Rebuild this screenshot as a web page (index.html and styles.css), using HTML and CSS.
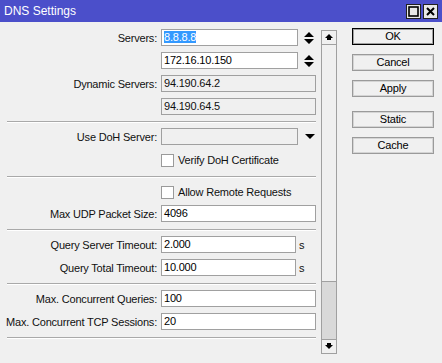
FILE: index.html
```html
<!DOCTYPE html>
<html lang="en">
<head>
<meta charset="UTF-8">
<title>DNS Settings</title>
<link rel="stylesheet" href="styles.css">
</head>
<body>
<div class="window">
    <div class="titlebar">
        <span class="title">DNS Settings</span>
        <div class="title-btns">
            <span class="tbtn">
                <svg width="11" height="11" viewBox="0 0 11 11"><rect x="1" y="1" width="9" height="9" fill="none" stroke="#000" stroke-width="1.6"/></svg>
            </span>
            <span class="tbtn">
                <svg width="11" height="11" viewBox="0 0 11 11"><path d="M2 2 L9 9 M9 2 L2 9" stroke="#000" stroke-width="2"/></svg>
            </span>
        </div>
    </div>

    <div class="main">
        <div class="form">
            <div class="section first">
                <div class="row">
                    <span class="label">Servers:</span>
                    <div class="field short"><span class="selected">8.8.8.8</span></div>
                    <svg class="spin" width="10" height="12" viewBox="0 0 10 12"><path d="M5 0 L10 5 L0 5 Z M0 7 L10 7 L5 12 Z" fill="#000"/></svg>
                </div>
                <div class="row">
                    <span class="label"></span>
                    <div class="field short">172.16.10.150</div>
                    <svg class="spin" width="10" height="12" viewBox="0 0 10 12"><path d="M5 0 L10 5 L0 5 Z M0 7 L10 7 L5 12 Z" fill="#000"/></svg>
                </div>
                <div class="row">
                    <span class="label">Dynamic Servers:</span>
                    <div class="field readonly">94.190.64.2</div>
                </div>
                <div class="row">
                    <span class="label"></span>
                    <div class="field readonly">94.190.64.5</div>
                </div>
            </div>
            <div class="sep"></div>

            <div class="section tall">
                <div class="row">
                    <span class="label">Use DoH Server:</span>
                    <div class="field short readonly"></div>
                    <svg class="drop" width="10" height="5" viewBox="0 0 10 5"><path d="M0 0 L10 0 L5 5 Z" fill="#000"/></svg>
                </div>
                <div class="row">
                    <span class="label"></span>
                    <span class="check"></span>
                    <span class="check-text">Verify DoH Certificate</span>
                </div>
            </div>
            <div class="sep"></div>

            <div class="section tight">
                <div class="row">
                    <span class="label"></span>
                    <span class="check"></span>
                    <span class="check-text">Allow Remote Requests</span>
                </div>
                <div class="row">
                    <span class="label">Max UDP Packet Size:</span>
                    <div class="field">4096</div>
                </div>
            </div>
            <div class="sep"></div>

            <div class="section">
                <div class="row">
                    <span class="label">Query Server Timeout:</span>
                    <div class="field timeout">2.000</div>
                    <span class="unit">s</span>
                </div>
                <div class="row">
                    <span class="label">Query Total Timeout:</span>
                    <div class="field timeout">10.000</div>
                    <span class="unit">s</span>
                </div>
            </div>
            <div class="sep"></div>

            <div class="section">
                <div class="row">
                    <span class="label">Max. Concurrent Queries:</span>
                    <div class="field">100</div>
                </div>
                <div class="row">
                    <span class="label">Max. Concurrent TCP Sessions:</span>
                    <div class="field">20</div>
                </div>
            </div>
            <div class="sep"></div>
        </div>

        <div class="scrollbar">
            <div class="sb-btn">
                <svg width="8" height="7" viewBox="0 0 8 7"><path d="M4 0 L8 4 L6 4 L6 6 L2 6 L2 4 L0 4 Z" fill="#000"/></svg>
            </div>
            <div class="sb-thumb"></div>
            <div class="sb-track"></div>
            <div class="sb-btn">
                <svg width="8" height="7" viewBox="0 0 8 7"><path d="M2 0 L6 0 L6 2 L8 2 L4 6 L0 2 L2 2 Z" fill="#000"/></svg>
            </div>
        </div>

        <div class="buttons">
            <div class="btn default">OK</div>
            <div class="btn">Cancel</div>
            <div class="btn">Apply</div>
            <div class="btn group">Static</div>
            <div class="btn">Cache</div>
        </div>
    </div>
</div>
</body>
</html>
```

FILE: styles.css
```css
body {
    margin: 0;
    font-family: "Liberation Sans", Arial, sans-serif;
    font-size: 11px;
    letter-spacing: -0.2px;
    color: #111111;
    background-color: #f0f0f0;
}

.window {
    width: 442px;
    height: 363px;
    background-color: #f0f0f0;
}

.titlebar {
    height: 22px;
    background-color: #4b4fca;
    display: flex;
    align-items: center;
    justify-content: space-between;
}

.title {
    color: #ffffff;
    font-size: 12px;
    letter-spacing: 0;
    padding-left: 4px;
}

.title-btns {
    display: flex;
    gap: 2px;
    padding-right: 4px;
}

.tbtn {
    width: 13px;
    height: 13px;
    border: 1px solid #202020;
    background-color: #e8e8e8;
    display: flex;
    align-items: center;
    justify-content: center;
}

.main {
    display: flex;
    align-items: flex-start;
}

.form {
    width: 316px;
}

.section {
    display: flex;
    flex-direction: column;
    gap: 6px;
    padding: 5px 0 7px;
}

.section.first {
    padding: 7px 0 6px;
}

.section.tall {
    padding-bottom: 8px;
}

.section.tight {
    gap: 5px;
}

.sep {
    margin-left: 7px;
    height: 1px;
    background-color: #a9a9a9;
    border-bottom: 1px solid #ffffff;
}

.row {
    display: flex;
    align-items: center;
    height: 17px;
}

.label {
    width: 157px;
    flex: none;
    text-align: right;
    margin-right: 4px;
    white-space: nowrap;
}

.field {
    flex: 1;
    height: 15px;
    line-height: 15px;
    padding-left: 2px;
    border: 1px solid #a0a0a0;
    background-color: #ffffff;
    color: #000000;
    white-space: nowrap;
}

.field.short {
    flex: none;
    width: 133px;
}

.field.timeout {
    flex: none;
    width: 131px;
}

.field.readonly {
    background-color: #f0f0f0;
    color: #111111;
}

.selected {
    background-color: #3399ff;
    color: #ffffff;
}

.spin {
    margin-left: 6px;
}

.drop {
    margin-left: 7px;
}

.unit {
    margin-left: 3px;
}

.check {
    width: 11px;
    height: 11px;
    border: 1px solid #9a9a9a;
    background-color: #ffffff;
    margin-top: 2px;
}

.check-text {
    margin-left: 4px;
}

.scrollbar {
    margin-left: 5px;
    margin-top: 8px;
    width: 14px;
    height: 322px;
    border: 1px solid #a0a0a0;
    display: flex;
    flex-direction: column;
}

.sb-btn {
    height: 13px;
    flex: none;
    background-color: #f0f0f0;
    display: flex;
    align-items: center;
    justify-content: center;
}

.sb-btn:first-child {
    border-bottom: 1px solid #a0a0a0;
}

.sb-btn:last-child {
    border-top: 1px solid #a0a0a0;
}

.sb-thumb {
    height: 236px;
    flex: none;
    background-color: #f0f0f0;
    border-bottom: 1px solid #a0a0a0;
}

.sb-track {
    flex: 1;
    background-color: #d9d9d9;
}

.buttons {
    margin-left: 15px;
    padding-top: 6px;
    width: 82px;
    display: flex;
    flex-direction: column;
    gap: 9px;
}

.btn {
    height: 15px;
    line-height: 15px;
    text-align: center;
    border: 1px solid #9a9a9a;
    box-shadow: inset 0 0 0 1px #d4d4d4;
    background-color: #f0f0f0;
    color: #000000;
}

.btn.default {
    border-color: #000000;
    box-shadow: inset 0 0 0 1px #a0a0a0;
}

.btn.group {
    margin-top: 5px;
}
```
